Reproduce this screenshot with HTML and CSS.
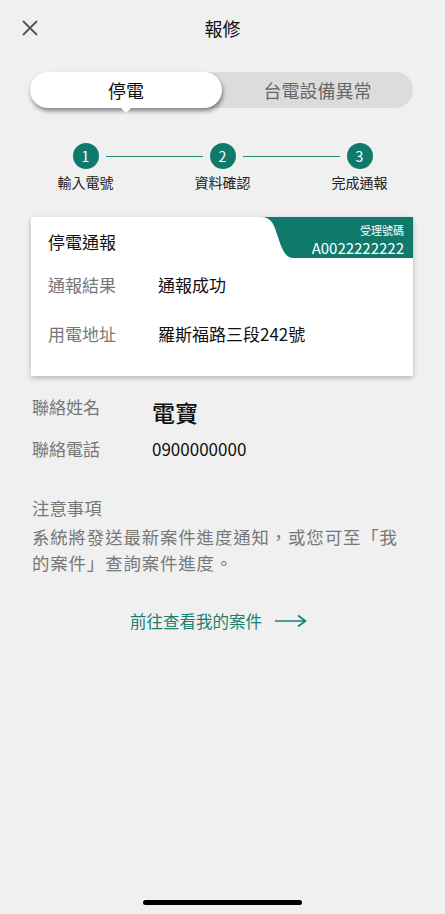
FILE: index.html
```html
<!DOCTYPE html>
<html lang="zh-Hant">
<head>
    <meta charset="UTF-8">
    <meta name="viewport" content="width=device-width, initial-scale=1.0">
    <link rel="stylesheet" href="styles.css">
    <title>報修</title>
</head>
<body>
    <div class="header">
        <button class="close" aria-label="close">
            <svg width="16" height="16" viewBox="0 0 16 16"><path d="M1 1L15 15M15 1L1 15" stroke="#555" stroke-width="1.8" fill="none"/></svg>
        </button>
        <div class="title">報修</div>
    </div>

    <div class="tabs">
        <div class="tab active">停電</div>
        <div class="tab">台電設備異常</div>
    </div>

    <div class="steps">
        <div class="step">
            <div class="dot">1</div>
            <div class="step-label">輸入電號</div>
        </div>
        <div class="line"></div>
        <div class="step">
            <div class="dot">2</div>
            <div class="step-label">資料確認</div>
        </div>
        <div class="line"></div>
        <div class="step">
            <div class="dot">3</div>
            <div class="step-label">完成通報</div>
        </div>
    </div>

    <div class="card">
        <div class="badge">
            <svg class="badge-curve" width="32" height="41" viewBox="0 0 32 41" preserveAspectRatio="none"><path d="M0 0 C11 0 13 8 17 20 C21 33 25 41 32 41 L32 0 Z" fill="#0f7a6c"/></svg>
            <div class="badge-body">
                <div class="badge-label">受理號碼</div>
                <div class="badge-num">A0022222222</div>
            </div>
        </div>
        <div class="card-title">停電通報</div>
        <div class="row">
            <div class="label">通報結果</div>
            <div class="value">通報成功</div>
        </div>
        <div class="row">
            <div class="label">用電地址</div>
            <div class="value">羅斯福路三段242號</div>
        </div>
    </div>

    <div class="contact">
        <div class="row">
            <div class="label">聯絡姓名</div>
            <div class="value name">電寶</div>
        </div>
        <div class="row">
            <div class="label">聯絡電話</div>
            <div class="value">0900000000</div>
        </div>
    </div>

    <div class="notice">
        <div>注意事項</div>
        <p>系統將發送最新案件進度通知，或您可至「我的案件」查詢案件進度。</p>
    </div>

    <a class="more" href="#">前往查看我的案件
        <svg width="33" height="14" viewBox="0 0 33 14"><path d="M1 7H31M24 1.5L31.5 7L24 12.5" stroke="#1a8071" stroke-width="1.6" fill="none"/></svg>
    </a>

    <div class="home-bar"></div>
</body>
</html>
```

FILE: styles.css
```css
body {
    margin: 0;
    width: 445px;
    height: 914px;
    background-color: #f0f0f0;
    font-family: "Noto Sans CJK TC", "Noto Sans", sans-serif;
    color: #111;
    position: relative;
    overflow: hidden;
}

.header {
    height: 58px;
    display: flex;
    align-items: center;
    justify-content: center;
    position: relative;
}

.close {
    position: absolute;
    left: 22px;
    top: 20px;
    background: none;
    border: none;
    padding: 0;
    width: 16px;
    height: 16px;
}

.title {
    font-size: 18px;
    margin-top: -2px;
}

.tabs {
    margin: 14px 32px 0 30px;
    height: 36px;
    border-radius: 18px;
    background-color: #dcdcdc;
    display: flex;
}

.tab {
    flex: 1;
    display: flex;
    align-items: center;
    justify-content: center;
    font-size: 18px;
    color: #666;
}

.tab.active {
    flex: 0 0 192px;
    background-color: #fff;
    color: #111;
    border-radius: 18px;
    box-shadow: 1px 3px 4px rgba(0, 0, 0, 0.45);
    position: relative;
}

.tab.active::after {
    content: "";
    position: absolute;
    left: 90px;
    bottom: -5px;
    border-left: 6px solid transparent;
    border-right: 6px solid transparent;
    border-top: 6px solid #fff;
}

.steps {
    margin: 35px 0 0 0;
    display: flex;
    justify-content: center;
    align-items: flex-start;
}

.step {
    width: 80px;
    display: flex;
    flex-direction: column;
    align-items: center;
}

.dot {
    width: 26px;
    height: 26px;
    border-radius: 50%;
    background-color: #0f7a6c;
    color: #fff;
    font-size: 14px;
    display: flex;
    align-items: center;
    justify-content: center;
}

.step-label {
    font-size: 14px;
    margin-top: 3px;
    color: #222;
}

.line {
    width: 97px;
    height: 1px;
    background-color: #2a8a7c;
    margin: 13px -20px 0;
}

.card {
    margin: 25px 32px 0 31px;
    height: 159px;
    background-color: #fff;
    box-shadow: 0 2px 5px rgba(0, 0, 0, 0.25);
    position: relative;
    padding: 13px 0 0 17px;
    box-sizing: border-box;
}

.badge {
    position: absolute;
    right: 0;
    top: 0;
    height: 41px;
    display: flex;
}

.badge-curve {
    display: block;
}

.badge-body {
    background-color: #0f7a6c;
    color: #fff;
    text-align: right;
    padding: 6px 9px 0 0;
    box-sizing: border-box;
    width: 120px;
}

.badge-label {
    font-size: 11px;
    line-height: 15px;
}

.badge-num {
    font-size: 15px;
    line-height: 19px;
}

.card-title {
    font-size: 17px;
    line-height: 24px;
}

.row {
    display: flex;
    align-items: center;
    font-size: 17px;
}

.card .row {
    margin-top: 18px;
}

.card .row + .row {
    margin-top: 24px;
}

.label {
    width: 110px;
    color: #777;
}

.contact {
    margin: 18px 0 0 32px;
}

.contact .label {
    width: 120px;
}

.contact .row {
    height: 36px;
}

.contact .row:first-child .label {
    align-self: flex-start;
}

.value.name {
    font-size: 23px;
    font-weight: 500;
}

.notice {
    margin: 29px 0 0 32px;
    width: 376px;
    font-size: 17.4px;
    color: #777;
    line-height: 26px;
}

.notice p {
    margin: 3px 0 0;
    letter-spacing: 0.9px;
}

.more {
    display: flex;
    align-items: center;
    justify-content: center;
    gap: 12px;
    margin: 33px 0 0;
    padding-right: 8px;
    font-size: 16.5px;
    color: #1a8071;
    text-decoration: none;
}

.home-bar {
    position: absolute;
    left: 143px;
    top: 900px;
    width: 159px;
    height: 5px;
    border-radius: 3px;
    background-color: #000;
}
```
